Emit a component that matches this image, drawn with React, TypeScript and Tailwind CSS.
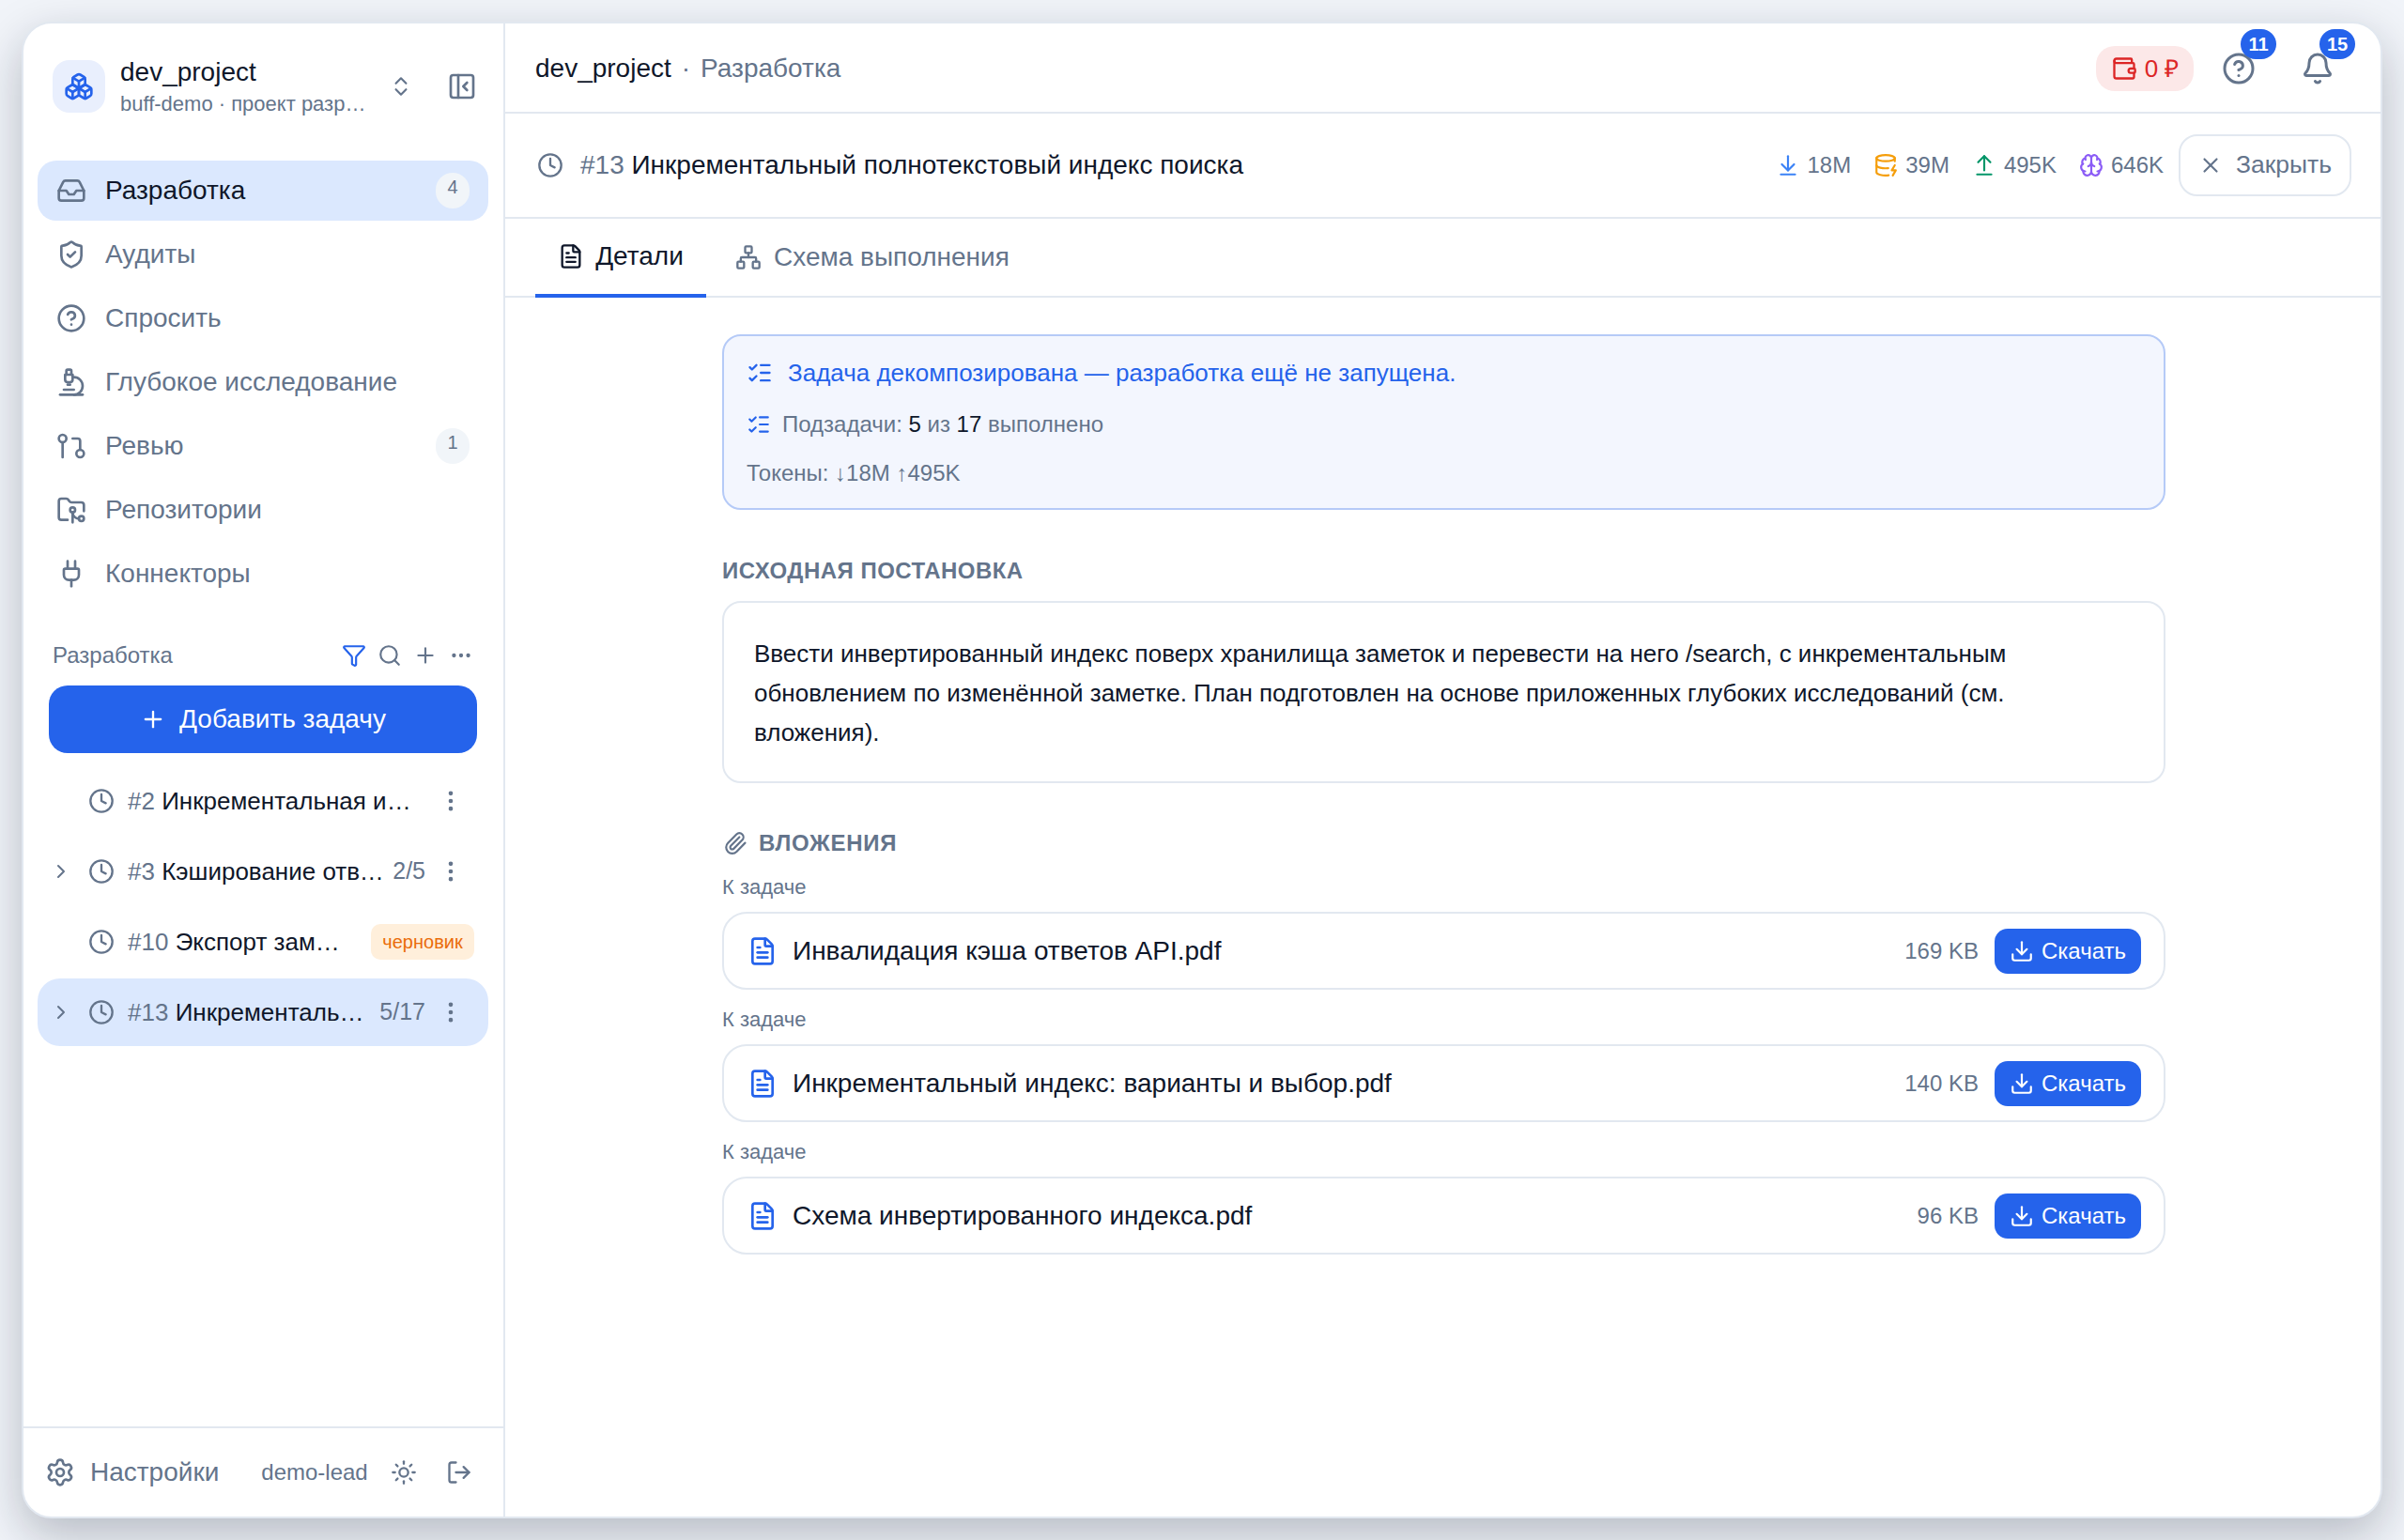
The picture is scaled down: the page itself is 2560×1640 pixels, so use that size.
import {
    ArrowDownToLine, ArrowUpFromLine, Bell, Boxes, Brain, ChevronRight, ChevronsUpDown, CircleHelp, Clock,
    DatabaseZap, Download, Ellipsis, EllipsisVertical, FileText, FolderGit2, Funnel,
    Inbox, ListChecks, LogOut, Microscope, Network, PanelLeftClose, Paperclip, Plug, Plus, Search, Settings,
    ShieldCheck, Sun, Wallet, X,
} from "lucide-react";

const ReviewIcon = ({ size, className }: { size: number; className?: string }) => (
    <svg
        width={size}
        height={size}
        viewBox="0 0 24 24"
        fill="none"
        stroke="currentColor"
        strokeWidth={2}
        strokeLinecap="round"
        strokeLinejoin="round"
        className={className}
    >
        <circle cx="5" cy="6" r="3" />
        <path d="M5 9v12" />
        <circle cx="19" cy="18" r="3" />
        <path d="M13 6h4a2 2 0 0 1 2 2v7" />
    </svg>
);

const navItems = [
    { label: "Разработка", icon: Inbox, badge: "4", active: true },
    { label: "Аудиты", icon: ShieldCheck },
    { label: "Спросить", icon: CircleHelp },
    { label: "Глубокое исследование", icon: Microscope },
    { label: "Ревью", icon: ReviewIcon, badge: "1" },
    { label: "Репозитории", icon: FolderGit2 },
    { label: "Коннекторы", icon: Plug },
];

const tasks = [
    { num: "#2", title: "Инкрементальная индексация", pad: "pr-[12px]" },
    { num: "#3", title: "Кэширование ответов API", count: "2/5", expand: true },
    { num: "#10", title: "Экспорт заметок", draft: true, pad: "pr-[14px]" },
    { num: "#13", title: "Инкрементальный индекс", count: "5/17", expand: true, active: true },
];

const files = [
    { name: "Инвалидация кэша ответов API.pdf", size: "169 KB" },
    { name: "Инкрементальный индекс: варианты и выбор.pdf", size: "140 KB" },
    { name: "Схема инвертированного индекса.pdf", size: "96 KB" },
];

const stats = [
    { icon: ArrowDownToLine, value: "18M", color: "text-[#3b82f6]" },
    { icon: DatabaseZap, value: "39M", color: "text-[#f59e0b]" },
    { icon: ArrowUpFromLine, value: "495K", color: "text-[#059669]" },
    { icon: Brain, value: "646K", color: "text-[#8b5cf6]" },
];

const Sidebar = () => (
    <aside className="flex w-[513px] shrink-0 flex-col border-r-2 border-[#e2e8f0]">
        <div className="flex h-[146px] shrink-0 items-start pl-[31px] pr-[20px] pt-[39px]">
            <div className="flex h-[56px] w-[56px] shrink-0 items-center justify-center rounded-[18px] bg-[#e9effd]">
                <Boxes size={32} className="text-[#2563eb]" />
            </div>
            <div className="ml-[16px] mt-[-3px] w-[262px] min-w-0">
                <div className="text-[28px] leading-[32px] text-[#0f172a]">dev_project</div>
                <div className="mt-[4px] truncate text-[22px] leading-[28px] text-[#64748b]">
                    buff-demo · проект разработки
                </div>
            </div>
            <ChevronsUpDown size={26} className="ml-[24px] mt-[15px] shrink-0 text-[#64748b]" />
            <PanelLeftClose size={32} className="ml-[36px] mt-[12px] shrink-0 text-[#64748b]" />
        </div>
        <nav className="flex flex-col gap-[4px] pl-[15px] pr-[16px]">
            {navItems.map((item) => {
                const Icon = item.icon;
                return (
                    <div
                        key={item.label}
                        className={`flex h-[64px] items-center rounded-[20px] pl-[20px] pr-[20px] text-[28px] ${
                            item.active ? "bg-[#dbe8fe] text-[#0f172a]" : "text-[#64748b]"
                        }`}
                    >
                        <Icon size={32} className="shrink-0 text-[#64748b]" />
                        <span className="ml-[20px] flex-1">{item.label}</span>
                        {item.badge && (
                            <span className="flex h-[38px] w-[36px] items-start justify-center rounded-full bg-[#f1f5f9] pt-[3px] text-[20px] leading-[24px] text-[#64748b]">
                                {item.badge}
                            </span>
                        )}
                    </div>
                );
            })}
        </nav>
        <div className="mt-[37px] flex items-center pl-[31px] pr-[32px]">
            <span className="flex-1 text-[24px] leading-[36px] text-[#64748b]">Разработка</span>
            <div className="flex items-center gap-[12px]">
                <Funnel size={26} className="text-[#2563eb]" />
                <Search size={26} className="text-[#64748b]" />
                <Plus size={26} className="text-[#64748b]" />
                <Ellipsis size={26} className="text-[#64748b]" />
            </div>
        </div>
        <div className="mt-[14px] pl-[27px] pr-[28px]">
            <button className="flex h-[72px] w-full items-center justify-center gap-[14px] rounded-[20px] bg-[#2563eb] text-[28px] text-white">
                <Plus size={28} />
                Добавить задачу
            </button>
        </div>
        <div className="mt-[15px] flex flex-col gap-[3px] pl-[15px] pr-[16px]">
            {tasks.map((task) => (
                <div
                    key={task.num}
                    className={`flex h-[72px] items-center rounded-[24px] pl-[13px] pr-[16px] ${
                        task.active ? "bg-[#dbe8fe]" : ""
                    }`}
                >
                    <span className="flex w-[24px] shrink-0 justify-center">
                        {task.expand && <ChevronRight size={24} className="text-[#64748b]" />}
                    </span>
                    <Clock size={28} className="ml-[17px] shrink-0 text-[#64748b]" />
                    <div className={`ml-[14px] min-w-0 flex-1 ${task.pad ?? ""}`}>
                        <div className="truncate text-[26px] text-[#0f172a]">
                            <span className="text-[#64748b]">{task.num}</span> {task.title}
                        </div>
                    </div>
                    {task.count && <span className="ml-[8px] shrink-0 text-[25px] text-[#64748b]">{task.count}</span>}
                    {task.draft ? (
                        <span className="ml-[16px] mr-[-1px] flex h-[38px] w-[110px] shrink-0 items-center justify-center rounded-[10px] bg-[#ffefdb] text-[20px] text-[#ea6c0a]">
                            черновик
                        </span>
                    ) : (
                        <EllipsisVertical size={28} className="ml-[13px] mr-[10px] shrink-0 text-[#64748b]" />
                    )}
                </div>
            ))}
        </div>
        <div className="mt-auto flex h-[96px] shrink-0 items-center border-t-2 border-[#e2e8f0] pl-[23px] text-[#64748b]">
            <Settings size={32} className="shrink-0" />
            <span className="ml-[16px] text-[28px]">Настройки</span>
            <span className="ml-[45px] text-[24px]">demo-lead</span>
            <Sun size={28} className="ml-[24px] shrink-0" />
            <LogOut size={28} className="ml-[31px] shrink-0" />
        </div>
    </aside>
);

const TopBar = () => (
    <header className="flex h-[96px] shrink-0 items-center border-b-2 border-[#e2e8f0] pl-[32px] pr-[17px] pt-[2px]">
        <span className="text-[28px] text-[#0f172a]">dev_project</span>
        <span className="mx-[11px] text-[28px] text-[#64748b]">·</span>
        <span className="flex-1 text-[28px] text-[#64748b]">Разработка</span>
        <div className="flex h-[48px] w-[104px] items-center justify-center gap-[8px] rounded-[20px] bg-[#fce8e8] text-[26px] text-[#dc2626]">
            <Wallet size={28} />
            0 ₽
        </div>
        <div className="relative ml-[30px] flex w-[36px] justify-center">
            <CircleHelp size={36} className="text-[#64748b]" />
            <span className="absolute right-[-22px] top-[-24px] flex h-[32px] w-[38px] items-center justify-center rounded-full bg-[#2563eb] text-[20px] font-bold text-white">
                11
            </span>
        </div>
        <div className="relative ml-[48px] mr-[32px] flex w-[36px] justify-center">
            <Bell size={36} className="text-[#64748b]" />
            <span className="absolute right-[-22px] top-[-24px] flex h-[32px] w-[38px] items-center justify-center rounded-full bg-[#2563eb] text-[20px] font-bold text-white">
                15
            </span>
        </div>
    </header>
);

const TaskHeader = () => (
    <div className="flex h-[112px] shrink-0 items-center border-b-2 border-[#e2e8f0] pl-[34px] pr-[31px]">
        <Clock size={28} className="shrink-0 text-[#64748b]" />
        <div className="ml-[18px] flex-1 text-[28px] text-[#0f172a]">
            <span className="text-[#64748b]">#13</span> Инкрементальный полнотекстовый индекс поиска
        </div>
        <div className="flex items-center gap-[24px]">
            {stats.map((stat) => {
                const Icon = stat.icon;
                return (
                    <div key={stat.value} className="flex items-center gap-[8px] text-[24px] text-[#64748b]">
                        <Icon size={26} className={stat.color} />
                        {stat.value}
                    </div>
                );
            })}
        </div>
        <button className="ml-[16px] flex h-[66px] w-[184px] items-center justify-center gap-[14px] rounded-[20px] border-2 border-[#e2e8f0] text-[26.5px] text-[#64748b]">
            <X size={26} />
            Закрыть
        </button>
    </div>
);

const Tabs = () => (
    <div className="flex h-[84px] shrink-0 border-b-2 border-[#e2e8f0] pl-[32px]">
        <div className="mb-[-2px] flex w-[182px] items-center justify-center gap-[12px] border-b-4 border-[#2563eb] text-[28px] text-[#0f172a]">
            <FileText size={28} />
            Детали
        </div>
        <div className="ml-[31px] flex items-center gap-[13px] text-[28px] text-[#64748b]">
            <Network size={28} />
            Схема выполнения
        </div>
    </div>
);

const Details = () => (
    <div className="ml-[231px] w-[1537px] pt-[39px]">
        <div className="h-[187px] rounded-[20px] border-2 border-[#b5caf7] bg-[#f3f6fe] pl-[24px] pt-[21px]">
            <div className="flex items-center gap-[16px] text-[26px] leading-[36px] text-[#2563eb]">
                <ListChecks size={28} />
                Задача декомпозирована — разработка ещё не запущена.
            </div>
            <div className="mt-[21px] flex items-center gap-[12px] text-[24px] leading-[32px] text-[#64748b]">
                <ListChecks size={26} className="text-[#2563eb]" />
                <span>
                    Подзадачи: <span className="text-[#0f172a]">5</span> из <span className="text-[#0f172a]">17</span>{" "}
                    выполнено
                </span>
            </div>
            <div className="mt-[20px] text-[24px] leading-[32px] text-[#64748b]">Токены: ↓18M ↑495K</div>
        </div>
        <h3 className="mt-[49px] text-[24px] font-bold leading-[32px] tracking-[0.02em] text-[#64748b]">
            ИСХОДНАЯ ПОСТАНОВКА
        </h3>
        <div className="mt-[16px] h-[194px] rounded-[20px] border-2 border-[#e2e8f0] px-[32px] pt-[33px] text-[26px] leading-[42px] text-[#0f172a]">
            Ввести инвертированный индекс поверх хранилища заметок и перевести на него /search, с инкрементальным
            обновлением по изменённой заметке. План подготовлен на основе приложенных глубоких исследований (см.
            вложения).
        </div>
        <div className="mt-[49px] flex h-[30px] items-center gap-[12px] text-[24px] font-bold leading-[30px] tracking-[0.03em] text-[#64748b]">
            <Paperclip size={26} className="ml-[1px]" />
            ВЛОЖЕНИЯ
        </div>
        {files.map((file) => (
            <div key={file.name} className="mt-[17px]">
                <div className="pt-[1px] text-[22px] leading-[27px] text-[#64748b]">К задаче</div>
                <div className="mt-[13px] flex h-[83px] items-center rounded-[26px] border-2 border-[#e2e8f0] pl-[25px] pr-[24px]">
                    <FileText size={32} className="shrink-0 text-[#2563eb]" />
                    <span className="ml-[16px] flex-1 text-[28px] text-[#0f172a]">{file.name}</span>
                    <span className="text-[24px] text-[#64748b]">{file.size}</span>
                    <button className="ml-[17px] flex h-[48px] w-[156px] items-center justify-center gap-[8px] rounded-[14px] bg-[#2563eb] text-[24px] text-white">
                        <Download size={26} />
                        Скачать
                    </button>
                </div>
            </div>
        ))}
    </div>
);

const App = () => (
    <div className="h-screen overflow-hidden bg-[#f1f4f9] p-[23px] font-['Liberation_Sans',sans-serif]">
        <div className="flex h-full overflow-hidden rounded-[32px] border-2 border-[#e2e8f0] bg-white shadow-[0_18px_50px_rgba(15,23,42,0.26)]">
            <Sidebar />
            <main className="flex min-w-0 flex-1 flex-col">
                <TopBar />
                <TaskHeader />
                <Tabs />
                <Details />
            </main>
        </div>
    </div>
);

export default App;
